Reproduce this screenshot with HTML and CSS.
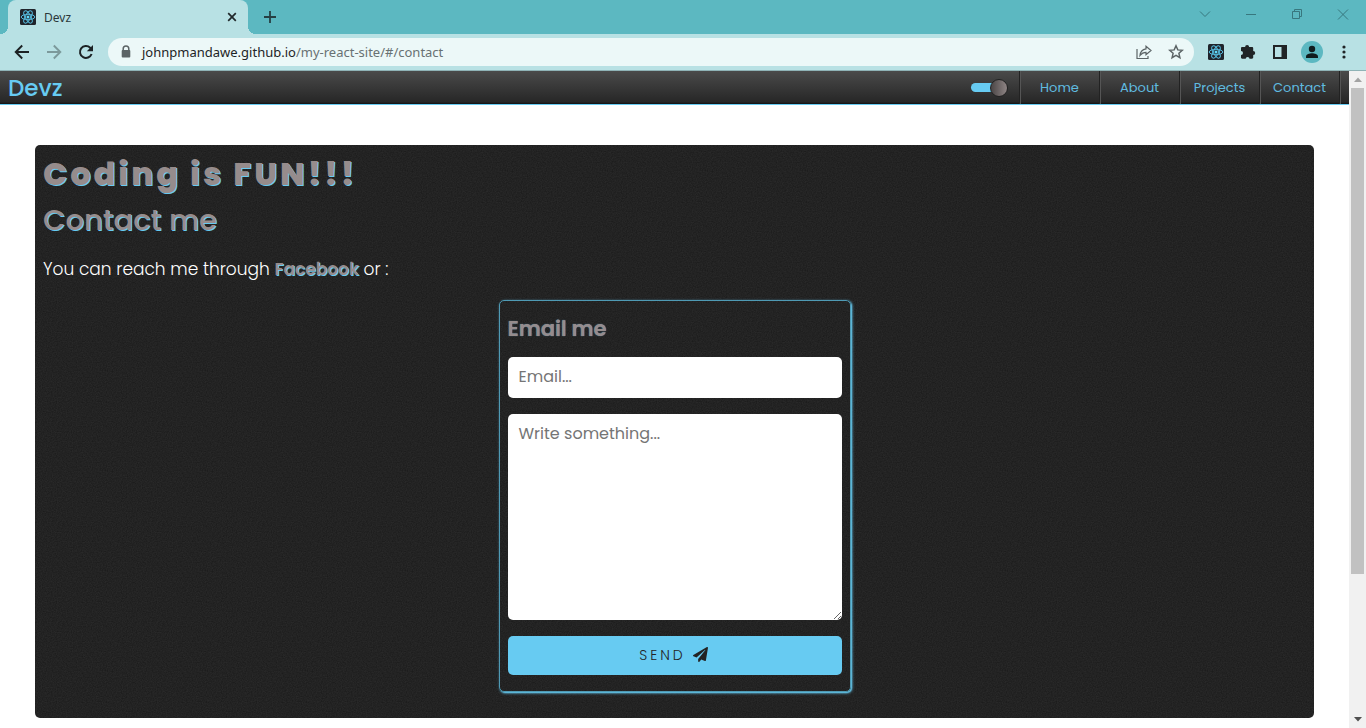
FILE: index.html
```html
<!DOCTYPE html>
<html lang="en">
<head>
<meta charset="utf-8">
<title>Devz</title>
<link rel="stylesheet" href="styles.css">
</head>
<body>
<svg class="symbols" aria-hidden="true">
  <symbol id="react" viewBox="0 0 16 16">
    <rect width="16" height="16" rx="1.5" fill="#20242b"/>
    <g fill="none" stroke="#56bcdf" stroke-width="1">
      <ellipse cx="8" cy="8" rx="6.8" ry="2.7"/>
      <ellipse cx="8" cy="8" rx="6.8" ry="2.7" transform="rotate(60 8 8)"/>
      <ellipse cx="8" cy="8" rx="6.8" ry="2.7" transform="rotate(120 8 8)"/>
    </g>
    <circle cx="8" cy="8" r="1.5" fill="#61dafb"/>
  </symbol>
</svg>

<header class="browser">
  <div class="tabstrip">
    <div class="tab">
      <svg class="icon16"><use href="#react"/></svg>
      <span class="tab-title">Devz</span>
      <button class="plain" aria-label="Close tab"><svg class="icon16" viewBox="0 0 16 16"><path d="M4.2 4.2l7.6 7.6M11.8 4.2l-7.6 7.6" stroke="#20282a" stroke-width="1.7"/></svg></button>
    </div>
    <button class="plain new-tab" aria-label="New tab"><svg class="icon16" viewBox="0 0 16 16"><path d="M8 2v12M2 8h12" stroke="#263f43" stroke-width="1.8"/></svg></button>
    <div class="window-buttons">
      <button class="plain" aria-label="Search tabs"><svg class="icon16" viewBox="0 0 16 16"><path d="M3 5.5l5 5 5-5"/></svg></button>
      <button class="plain" aria-label="Minimize"><svg class="icon16" viewBox="0 0 16 16"><path d="M3 8.5h10"/></svg></button>
      <button class="plain" aria-label="Restore"><svg class="icon16" viewBox="0 0 16 16"><path d="M3.500 5.500h7v7h-7zM5.500 5.500v-2h7v7h-2"/></svg></button>
      <button class="plain" aria-label="Close"><svg class="icon16" viewBox="0 0 16 16"><path d="M3 3.500l10 10M13 3.500l-10 10"/></svg></button>
    </div>
  </div>
  <div class="toolbar">
    <button class="plain" aria-label="Back"><svg class="icon16" viewBox="0 0 16 16"><path d="M15 8H2M8.200 1.500L1.700 8l6.500 6.500" fill="none" stroke="#1c2224" stroke-width="1.900"/></svg></button>
    <button class="plain" aria-label="Forward"><svg class="icon16" viewBox="0 0 16 16"><path d="M1 8h13M7.800 1.500L14.300 8l-6.500 6.500" fill="none" stroke="#7c999b" stroke-width="1.900"/></svg></button>
    <button class="plain" aria-label="Reload"><svg class="icon16" viewBox="0 0 16 16"><path d="M13.600 10A6 6 0 1 1 12.200 3.700L13.500 5" fill="none" stroke="#1c2224" stroke-width="2"/><path d="M15 1v6.200H8.800z" fill="#1c2224"/></svg></button>
    <div class="address">
      <svg class="icon16" viewBox="0 0 16 16"><path d="M5.200 7V4.700a2.800 2.800 0 0 1 5.600 0V7" fill="none" stroke="#5c6466" stroke-width="1.500"/><rect x="3.700" y="6" width="8.600" height="7.500" rx="1" fill="#5c6466"/></svg>
      <span class="url">johnpmandawe.github.io<span class="path">/my-react-site/#/contact</span></span>
      <button class="plain" aria-label="Share"><svg class="icon16" viewBox="0 0 16 16"><path d="M1 5v9.500h11V12M10 2.200l5 4.300-5 4.300V8.300C7 8.300 5.500 9.500 4 11.500c.3-3.500 2.200-6 6-6.600z" fill="none" stroke="#5c6466" stroke-width="1.200"/></svg></button>
      <button class="plain" aria-label="Bookmark this tab"><svg class="icon16" viewBox="0 0 16 16"><path d="M8 1.800l1.800 4.100 4.500.4-3.400 3 1 4.400L8 11.400l-3.900 2.300 1-4.400-3.400-3 4.500-.4z" fill="none" stroke="#5c6466" stroke-width="1.500"/></svg></button>
    </div>
    <button class="plain" aria-label="React Developer Tools"><svg class="icon16"><use href="#react"/></svg></button>
    <button class="plain" aria-label="Extensions"><svg class="icon16" viewBox="0 0 16 16"><path d="M1 4.300c0-.7.500-1.200 1.200-1.200h2.900a2 2 0 1 1 4 0h2.900c.7 0 1.200.5 1.200 1.200v2.600a2 2 0 1 1 0 4v2.700c0 .7-.5 1.200-1.200 1.200H9.500a1.900 1.900 0 1 0-3.800 0H2.200c-.7 0-1.200-.5-1.200-1.200v-2.700a2 2 0 1 0 0-4z" fill="#202426"/></svg></button>
    <button class="plain" aria-label="Side panel"><svg class="icon16" viewBox="0 0 16 16"><path fill-rule="evenodd" d="M1 1h14v14H1zM3 3v10h6.500V3z" fill="#202426"/></svg></button>
    <button class="plain avatar" aria-label="Profile"><svg class="icon16" viewBox="0 0 16 16"><circle cx="8" cy="5" r="3.200" fill="#101c1e"/><path d="M2 14v-1.500C2 10.300 5.500 9.200 8 9.200s6 1.100 6 3.300V14z" fill="#101c1e"/></svg></button>
    <button class="plain" aria-label="Menu"><svg class="icon16" viewBox="0 0 16 16"><g fill="#202426"><circle cx="8" cy="3" r="1.600"/><circle cx="8" cy="8" r="1.600"/><circle cx="8" cy="13" r="1.600"/></g></svg></button>
  </div>
</header>

<div class="viewport">
  <div class="page">
    <nav class="navbar">
      <a class="brand" href="#/">Devz</a>
      <input class="toggle" type="checkbox" aria-label="Dark mode" checked>
      <ul class="links">
        <li><a href="#/">Home</a></li>
        <li><a href="#/about">About</a></li>
        <li><a href="#/projects">Projects</a></li>
        <li><a href="#/contact">Contact</a></li>
      </ul>
    </nav>
    <main class="panel">
      <h1>Coding is FUN!!!</h1>
      <h2>Contact me</h2>
      <p class="reach">You can reach me through <a href="#facebook">Facebook</a> or :</p>
      <form class="card">
        <h3>Email me</h3>
        <input class="field" type="email" placeholder="Email..." aria-label="Email">
        <textarea class="field message" placeholder="Write something..." aria-label="Message"></textarea>
        <button class="send" type="button">SEND
          <svg class="plane" viewBox="0 0 512 512"><path fill="#232323" d="M476 3.200L12.500 270.600c-18.100 10.400-15.800 35.600 2.200 43.200L121 358.400l287.300-253.200c5.500-4.900 13.300 2.600 8.600 8.300L176 407v80.500c0 23.600 28.500 32.900 42.500 15.800L282 426l124.600 52.200c14.200 6 30.400-2.900 33-18.200l72-432C515 7.800 493.300-6.800 476 3.200z"/></svg>
        </button>
      </form>
    </main>
  </div>
  <div class="scrollbar" aria-hidden="true">
    <svg class="arrow" viewBox="0 0 17 17"><path d="M5 11h8L9 6.500z" fill="#a3a3a3"/></svg>
    <div class="rail"><div class="thumb"></div></div>
    <svg class="arrow" viewBox="0 0 17 17"><path d="M5 6h8l-4 4.500z" fill="#505050"/></svg>
  </div>
</div>
</body>
</html>
```
FILE: styles.css
```css
:root {
  --sky: #67cbf2;
  --ink: #232323;
  --stone: #968c8c;
  --teal: #5cb8c1;
  --mist: #b8e1e4;
}
* { box-sizing: border-box; }
body {
  margin: 0;
  height: 100vh;
  display: flex;
  flex-direction: column;
  overflow: hidden;
  background: #fff;
  font-family: Poppins, Inter, sans-serif;
}
.symbols { display: none; }
.icon16 { display: block; flex: none; width: 16px; height: 16px; }
.plain { flex: none; padding: 0; border: 0; background: none; }

.browser { flex: none; font-family: "Noto Sans", sans-serif; background: var(--mist); border-bottom: 1px solid #8fb3b6; }
.tabstrip { display: flex; align-items: center; height: 34px; padding-left: 8px; background: var(--teal); }
.tab {
  position: relative;
  display: flex;
  align-items: center;
  width: 240px;
  height: 34px;
  padding: 0 8px 0 12px;
  border-radius: 8px 8px 0 0;
  background: var(--mist);
}
.tab::before, .tab::after {
  content: "";
  position: absolute;
  bottom: 0;
  width: 8px;
  height: 8px;
}
.tab::before { right: 100%; background: radial-gradient(circle at 0 0, var(--teal) 8px, var(--mist) 8px); }
.tab::after { left: 100%; background: radial-gradient(circle at 100% 0, var(--teal) 8px, var(--mist) 8px); }
.tab-title { flex: 1; margin-left: 8px; font-size: 12px; color: #2b3739; }
.new-tab { margin-left: 14px; }
.window-buttons { display: flex; gap: 30px; margin-left: auto; padding: 0 15px 6px 0; }
.window-buttons path { fill: none; stroke: #38777e; }
.toolbar { display: flex; align-items: center; gap: 16px; height: 36px; padding: 0 14px; }
.address {
  flex: 1;
  display: flex;
  align-items: center;
  gap: 16px;
  height: 28px;
  margin: 0 -2px;
  padding: 0 10px;
  border-radius: 14px;
  background: #ecf8f8;
}
.url { flex: 1; margin-left: -8px; font-size: 13px; color: #1d2426; }
.path { color: #687173; }
.avatar { margin: 0 -3px; padding: 3px; border-radius: 50%; background: var(--teal); }

.viewport { flex: 1; display: flex; min-height: 0; }
.page { flex: 1; min-width: 0; overflow: hidden; }
.navbar {
  display: flex;
  align-items: center;
  height: 34px;
  padding-right: 9px;
  border-bottom: 1px solid var(--sky);
  background: linear-gradient(#4a4a4a, #272727 94%, #111);
}
.brand { margin-left: 8px; font-size: 23px; line-height: 32px; font-weight: 500; color: var(--sky); text-decoration: none; }
.toggle {
  appearance: none;
  position: relative;
  width: 37px;
  height: 9px;
  margin: 0 11px 0 auto;
  border-radius: 5px;
  background: linear-gradient(90deg, var(--sky) 70%, transparent 70%);
}
.toggle::after {
  content: "";
  position: absolute;
  right: 0;
  top: -4px;
  width: 16px;
  height: 16px;
  border: 1px solid #222;
  border-radius: 50%;
  background: linear-gradient(90deg, #4a4545, #8f8585);
}
.links { display: flex; height: 100%; margin: 0; padding: 0; list-style: none; border-right: 1px solid #222; box-shadow: 1px 0 #555; }
.links li { width: 80px; border-left: 1px solid #222; box-shadow: inset 1px 0 #555; }
.links a { display: block; font-size: 13px; line-height: 33px; text-align: center; color: #60bce0; text-decoration: none; }

.panel {
  margin: 40px 35px 0;
  padding: 8px 8px 26px;
  border-radius: 5px;
  color: #fff;
  background-color: #1e1e1e;
  background-image: url("data:image/svg+xml,%3Csvg xmlns='http://www.w3.org/2000/svg' width='100' height='100'%3E%3Cfilter id='n' color-interpolation-filters='sRGB'%3E%3CfeTurbulence type='fractalNoise' baseFrequency='.8' numOctaves='2' stitchTiles='stitch'/%3E%3CfeColorMatrix values='1.6 0 0 0 -.3 1.6 0 0 0 -.3 1.6 0 0 0 -.3 0 0 0 0 1'/%3E%3C/filter%3E%3Crect width='100' height='100' filter='url(%23n)' opacity='.05'/%3E%3C/svg%3E");
}
h1, h2, h3 { margin: 0; color: var(--stone); text-shadow: 1px 1px var(--sky); }
h1 { font-size: 32px; line-height: 42px; font-weight: 800; letter-spacing: 3px; }
h2 { font-size: 29px; line-height: 50px; font-weight: 500; }
h3 { font-size: 21px; line-height: 40px; font-weight: 600; text-shadow: 0 0 1px #5c9bc0; }
.reach { margin: 8px 0 15px; font-size: 17px; line-height: 32px; font-weight: 300; }
.reach a { font-weight: 600; color: var(--stone); text-decoration: none; text-shadow: 1px 1px var(--sky); }
.card {
  display: flex;
  flex-direction: column;
  gap: 16px;
  width: 352px;
  max-width: 100%;
  margin: 0 auto;
  padding: 8px 8px 16px;
  border: 1px solid #4f9ab4;
  border-radius: 5px;
  box-shadow: 1px 1px 3px var(--sky), 1px 1px 1px #4f9ab4;
}
.card h3 { margin-bottom: -8px; }
.field {
  width: 100%;
  height: 41px;
  padding: 7px 11px 9px;
  border: 0;
  border-radius: 5px;
  background: #fff;
  font: 16px/24px Poppins, Inter, sans-serif;
}
.field::placeholder { color: #757575; }
.message { height: 206px; padding-top: 8px; resize: vertical; }
.send {
  display: flex;
  align-items: center;
  justify-content: center;
  gap: 7px;
  height: 39px;
  padding: 0 8px 2px 6px;
  border: 0;
  border-radius: 5px;
  background: var(--sky);
  color: var(--ink);
  font: 300 14px/20px Poppins, Inter, sans-serif;
  letter-spacing: 3px;
}
.plane { width: 15px; height: 15px; }

.scrollbar { display: flex; flex-direction: column; width: 17px; background: #f1f1f1; }
.arrow { flex: none; width: 17px; height: 17px; }
.rail { flex: 1; padding: 0 2px; }
.thumb { height: 78%; background: #c1c1c1; }
```
